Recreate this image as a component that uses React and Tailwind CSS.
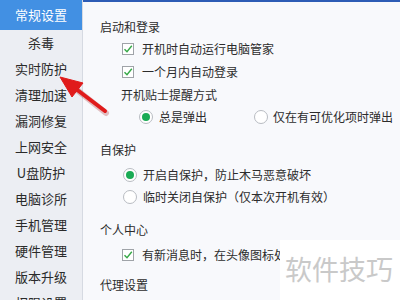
const font = { fontFamily: '"Noto Sans CJK SC", "Noto Sans", sans-serif' };

const menu = [
  "杀毒",
  "实时防护",
  "清理加速",
  "漏洞修复",
  "上网安全",
  "U盘防护",
  "电脑诊所",
  "手机管理",
  "硬件管理",
  "版本升级",
  "权限设置",
];

const Check = () => (
  <span className="w-[12px] h-[12px] border border-[#9fa3a8] bg-white flex items-center justify-center shrink-0">
    <svg width="10" height="10" viewBox="0 0 10 10">
      <path d="M1.5 5.2 L4 7.8 L8.8 1.8" fill="none" stroke="#36a847" strokeWidth="1.4" />
    </svg>
  </span>
);

const Radio = ({ on }) => (
  <span className="w-[14px] h-[14px] rounded-full border border-[#b8bcc2] bg-white flex items-center justify-center shrink-0">
    {on && <span className="w-[8px] h-[8px] rounded-full bg-[#1aab55]" />}
  </span>
);

const Row = ({ className = "", children }) => (
  <div className={`h-[22px] flex items-center text-[12px] text-[#2c2c2c] whitespace-nowrap ${className}`}>{children}</div>
);

export default function App() {
  return (
    <div className="relative w-[400px] h-[300px] overflow-hidden flex bg-[#f8f9fc]" style={font}>
      <div className="w-[83px] shrink-0 bg-[#eceef3] border-r border-[#d6dae2] flex flex-col">
        <div className="h-[30px] shrink-0 bg-[#4290e3] text-white text-[13px] flex items-center justify-center">
          常规设置
        </div>
        {menu.map((m) => (
          <div key={m} className="h-[26px] shrink-0 text-[13px] text-[#2a2a2a] flex items-center justify-center">
            {m}
          </div>
        ))}
      </div>

      <div className="flex-1 flex flex-col">
        <div className="h-[2px] bg-[#2d5cb5] shrink-0" />
        <div className="pl-[17px] pt-[14px] flex flex-col">
          <Row>启动和登录</Row>
          <Row className="pl-[22px] gap-[8px]"><Check />开机时自动运行电脑管家</Row>
          <Row className="mt-[1px] pl-[22px] gap-[8px]"><Check />一个月内自动登录</Row>
          <Row className="mt-[1px] pl-[21px]">开机贴士提醒方式</Row>
          <Row className="pl-[39px]">
            <span className="flex items-center gap-[6px] w-[115px]"><Radio on />总是弹出</span>
            <span className="flex items-center gap-[5px]"><Radio />仅在有可优化项时弹出</span>
          </Row>
          <Row className="mt-[11px]">自保护</Row>
          <Row className="mt-[3px] pl-[23px] gap-[6px]"><Radio on />开启自保护，防止木马恶意破坏</Row>
          <Row className="pl-[23px] gap-[6px]"><Radio />临时关闭自保护（仅本次开机有效）</Row>
          <Row className="mt-[11px]">个人中心</Row>
          <Row className="mt-[3px] pl-[22px] gap-[8px] w-[180px] overflow-hidden"><Check />有新消息时，在头像图标处</Row>
          <Row className="mt-[8px]">代理设置</Row>
        </div>
      </div>

      <div className="absolute left-[280px] top-[240px] w-[120px] h-[60px] bg-white flex items-center pl-[5px]">
        <span className="text-[27px] text-[#c9c9c9] leading-none mt-[-3px]">软件技巧</span>
      </div>

      <svg className="absolute left-0 top-0" width="400" height="300" viewBox="0 0 400 300">
        <line x1="77" y1="90" x2="106" y2="113" stroke="#9a1010" strokeOpacity="0.25" strokeWidth="6" strokeLinecap="round" />
        <line x1="76" y1="89" x2="105" y2="111" stroke="#e01b1b" strokeWidth="4" strokeLinecap="round" />
        <polygon points="60,77 83,83 72,97" fill="#e01b1b" stroke="#e01b1b" strokeWidth="1" strokeLinejoin="round" />
      </svg>
    </div>
  );
}
